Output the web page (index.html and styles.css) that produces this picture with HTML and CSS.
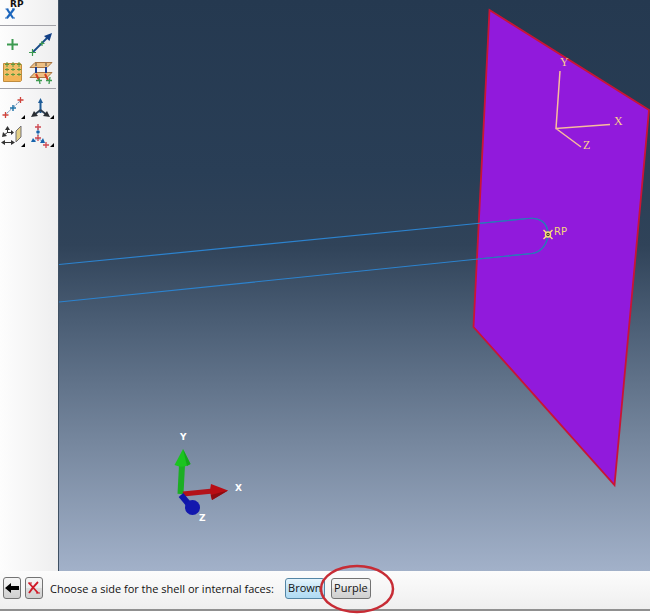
FILE: index.html
```html
<!DOCTYPE html>
<html lang="en">
<head>
<meta charset="utf-8">
<title>Model viewport</title>
<link rel="stylesheet" href="styles.css">
</head>
<body>
<div class="workspace">
  <nav class="toolbox" aria-label="Toolbox">
    <div class="group group-rp">
      <button class="tool tool-rp" type="button" aria-label="Reference point">
        <svg width="26" height="22" viewBox="0 0 26 22"><path d="M7 9l6 9M14 9l-7 9" stroke="#1c66bd" stroke-width="2.200"/><path d="M5.500 9h3M12 9h3M5 18h3M12 18h3" stroke="#1c66bd"/><text class="rp" x="10" y="7">RP</text></svg>
      </button>
    </div>
    <div class="group">
      <button class="tool" type="button" aria-label="Create datum point">
        <svg width="26" height="26" viewBox="0 0 26 26"><path d="M12.500 7v11M7 12.500h11" stroke="#3c9a50" stroke-width="2"/></svg>
      </button>
      <button class="tool" type="button" aria-label="Create datum axis">
        <svg width="26" height="26" viewBox="0 0 26 26"><path d="M5 20L19 6" stroke="#174b87" stroke-width="1.800"/><path d="M24 1l-2.500 8-5.500-5z" fill="#123f86"/><path d="M4.500 17v7M1 20.500h7M14 9v5M11.500 11.500h5" stroke="#3c9a50" stroke-width="1.200"/></svg>
      </button>
      <button class="tool" type="button" aria-label="Partition face">
        <svg width="26" height="26" viewBox="0 0 26 26"><path d="M3.500 3.500h17l1 1v16l-1 1h-17z" fill="#f2bd66" stroke="#c08c3e"/><path d="M4 16h17v5H4z" fill="#f3b457"/><path d="M5 4.500h4M11 4.500h4M17 4.500h4M5 9.500h4M11 9.500h4M17 9.500h4M5 14.500h4M11 14.500h4M17 14.500h4M7 2v5M13 2v5M19 2v5M7 8v3M13 8v3M19 8v3M7 13v3M13 13v3M19 13v3" stroke="#5f9a3e"/></svg>
      </button>
      <button class="tool" type="button" aria-label="Partition cell">
        <svg width="26" height="26" viewBox="0 0 26 26"><path d="M7 2.500h17l-5 5H2zM7 12.500h17l-5 5H2z" fill="#eec084" stroke="#a87543"/><path d="M8 7v6M18 7v6" stroke="#1d3f90" stroke-width="2"/><path d="M8 3v3M18 3v3" stroke="#444"/><path d="M8 14l3 6M17 14l3 6" stroke="#d43e22" stroke-width="2"/><path d="M8 20.500h6M11 18l1 6M18 20.500h6M22 17l-1 7" stroke="#3c9a50" stroke-width="1.300"/></svg>
      </button>
    </div>
    <div class="group">
      <button class="tool" type="button" aria-label="Point between points">
        <svg width="26" height="26" viewBox="0 0 26 26"><path d="M5 22L20 8" stroke="#507da8" stroke-dasharray="2 1"/><path d="M5.500 19v6M2.500 22h6M20.500 4v6M17.500 7h6" stroke="#cf443c" stroke-width="1.300"/><path d="M13 12v6M10 15h6" stroke="#2376aa" stroke-width="1.500"/><path d="M25 22v4h-4z"/></svg>
      </button>
      <button class="tool" type="button" aria-label="Create coordinate system">
        <svg width="26" height="26" viewBox="0 0 26 26"><path d="M12.500 8v12" stroke="#1d5b97" stroke-width="2"/><path d="M12.500 5l2.500 5h-5z" fill="#1d5b97"/><path d="M12.500 17L6 22M12.500 17L19 22" stroke="#28394c" stroke-width="1.800"/><path d="M3 24l3-6 4 5zM22 24l-7-1 4-5z" fill="#292d32"/><path d="M26 22v4h-4z"/></svg>
      </button>
      <button class="tool" type="button" aria-label="Datum plane">
        <svg width="26" height="26" viewBox="0 0 26 26"><path d="M7.500 7v5M7.500 11.500L4 14M7.500 11.500H13M3 21.500h9" stroke="#333"/><path d="M7.500 5l2.500 4H5zM14 11.500l-3-2.500v5zM2 16l1-5 4 4zM1 21.500l4-2.500v5zM15 21.500l-4-2.500v5z" fill="#333"/><path d="M16 10l5-5v11l-5 5z" fill="#e3cf85" stroke="#727176"/><path d="M25 22v4h-4z"/></svg>
      </button>
      <button class="tool" type="button" aria-label="Datum system by three points">
        <svg width="26" height="26" viewBox="0 0 26 26"><path d="M10 7v11M10 17L5 21M10 17l5 4" stroke="#397fc2" stroke-dasharray="2 1"/><path d="M10 3v6M7 6h6M10 14v6M7 17h6M18 21v6M15 24h6" stroke="#d04850" stroke-width="1.300"/><circle cx="10" cy="11" r="1.800" fill="#1764ac"/><path d="M5 17l3 4H3zM15 17l2 5h-5z" fill="#1764ac"/><path d="M26 22v4h-4z"/></svg>
      </button>
    </div>
  </nav>
  <main class="viewport">
    <svg class="scene" viewBox="59 0 591 571" preserveAspectRatio="xMidYMid slice" role="img" aria-label="Shell plate and wire part">
      <path d="M489.500 10L649 110L614.500 485L473.500 327z" fill="#911adc" stroke="#c91535" stroke-width="1.800"/>
      <path d="M59 264.500L528 218.500C539 217 547 222 548 233C548 244 541 252 532 253.500L59 302" fill="none" stroke="#2c83cf" stroke-width="1.200"/>
      <path d="M479 223.500L528 218.500C539 217 547 222 548 233C548 244 541 252 532 253.500L478 259" fill="none" stroke="#2a77b3" stroke-width="1.200"/>
      <path d="M543.500 230l9 9M552.500 230l-9 9" stroke="#fbe27d" stroke-width="1.400"/><circle cx="548" cy="234.500" r="2.500" fill="#3b3226" stroke="#fbe27d" stroke-width="1.500"/><circle cx="548" cy="234.500" r=".7" fill="#fbe27d"/>
      <text class="point-label" x="554" y="235">RP</text>
      <path d="M560 71L556 128.500L610 124.500M556 128.500L581 147" fill="none" stroke="#f8bd9b" stroke-width="1.500"/>
      <g class="datum-label"><text x="560" y="66">Y</text><text x="614" y="125">X</text><text x="583" y="149">Z</text></g>
      <path d="M182 465L180.500 494" stroke="#1cae24" stroke-width="6"/><path d="M183 449L190.500 464Q183 469 174.500 465z" fill="#1bc41f"/><path d="M183 449l4 17 3.500-2z" fill="#14a51a"/>
      <path d="M183 494L213 491" stroke="#b3131a" stroke-width="5"/><path d="M211 484L228 490.500L212 500Q209 492 211 484z" fill="#b90d14"/><path d="M211 495l17-4.500L212 500z" fill="#8d0c11"/>
      <path d="M181 495L191 507" stroke="#0e16a9" stroke-width="6"/><circle cx="192.500" cy="507.500" r="7.500" fill="#1218ae"/>
      <g class="triad-label"><text x="180" y="440">Y</text><text x="235" y="491">X</text><text x="199" y="521">Z</text></g>
    </svg>
  </main>
</div>
<footer class="prompt">
  <button class="square" type="button" aria-label="Previous"><svg width="16" height="20" viewBox="0 0 16 20"><path d="M1 10l6-5v3h8v4H7v3z"/></svg></button>
  <button class="square cancel" type="button" aria-label="Cancel"><svg width="16" height="20" viewBox="0 0 16 20"><path d="M3 5l9 10M12 4Q7 9 3 15" fill="none" stroke="#cf1826" stroke-width="1.800"/><path d="M2 5h4M10 15h4" stroke="#cf1826"/></svg></button>
  <p class="message">Choose a side for the shell or internal faces:</p>
  <button class="choice selected" type="button">Brown</button>
  <span class="marked"><button class="choice" type="button">Purple</button><svg class="ring" width="76" height="50" viewBox="0 0 76 50" aria-hidden="true"><ellipse cx="38" cy="25" rx="36" ry="23" fill="none" stroke="#c72c35" stroke-width="2.500"/></svg></span>
</footer>
</body>
</html>
```
FILE: styles.css
```css
* { box-sizing: border-box; }
body {
  margin: 0;
  min-height: 100vh;
  display: flex;
  flex-direction: column;
  padding-bottom: 4px;
  background: #fff;
  color: #111;
  font-family: "Open Sans", "Noto Sans", sans-serif;
  font-size: 11px;
  overflow: hidden;
}
button { font: inherit; color: inherit; padding: 0; }
svg { display: block; }
.workspace { flex: 1; display: flex; min-height: 0; }
.toolbox {
  width: 59px;
  flex: none;
  background: linear-gradient(90deg, #fdfdfd, #eeeeef);
  border-right: 1px solid #3f5063;
}
.group {
  display: grid;
  grid-template-columns: 26px 26px;
  gap: 2px;
  padding: 6px 0 2px;
  margin-right: 2px;
  border-bottom: 1px solid #a2a2a8;
}
.group:last-child { border: 0; padding-top: 4px; }
.group-rp { padding: 0 0 3px; }
.tool { border: 0; background: none; }
.tool svg { overflow: visible; }
.rp { font: bold 9px "DejaVu Sans", sans-serif; fill: #111; }
.viewport {
  flex: 1;
  min-width: 0;
  position: relative;
  background: linear-gradient(#253950, #293e56 30%, #304359 43%, #4c5f76 57%, #75869d 77%, #a2b1c9);
}
.scene { position: absolute; inset: 0; width: 100%; height: 100%; }
.point-label { font: 10px "DejaVu Sans", sans-serif; fill: #f5d878; }
.datum-label { font: 12px "Liberation Serif", serif; fill: #fbd18e; }
.triad-label { font: bold 9px "DejaVu Sans", sans-serif; fill: #fff; }
.prompt {
  flex: none;
  height: 40px;
  display: flex;
  align-items: center;
  padding: 0 3px 4px;
  background: linear-gradient(#fcfcfc, #efefef);
  border-bottom: 2px solid #909090;
}
.square, .choice {
  border: 1px solid #737373;
  border-radius: 3px;
  background: linear-gradient(#f5f5f5, #ececec 48%, #dcdcdc 52%, #d0d0d0);
}
.square { width: 18px; height: 22px; }
.cancel { margin-left: 4px; }
.message { margin: 0 11px 0 7px; white-space: nowrap; }
.choice { display: block; width: 40px; height: 21px; line-height: 18px; }
.selected { background: linear-gradient(#e5f4fc, #c5e5f7 48%, #b0dbf3); border-color: #5586a5; }
.marked { position: relative; margin-left: 6px; }
.ring { position: absolute; left: -12px; top: -14px; pointer-events: none; }
```
